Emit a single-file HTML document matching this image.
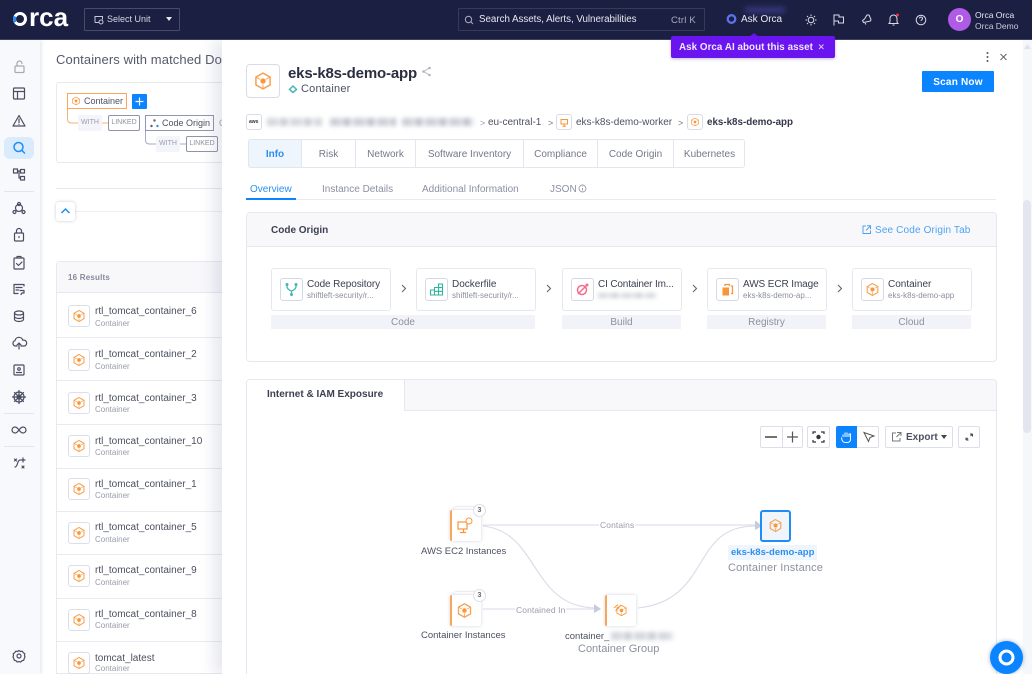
<!DOCTYPE html>
<html><head><meta charset="utf-8"><style>
*{box-sizing:border-box}
html,body{margin:0;padding:0;width:1032px;height:674px;overflow:hidden;background:#fff;font-family:"Liberation Sans",sans-serif;color:#3c4052}
#root{position:absolute;left:0;top:0;width:1032px;height:674px;overflow:hidden;filter:blur(.3px)}
.a{position:absolute}
.t{position:absolute;white-space:nowrap;line-height:14px}
svg{position:absolute;overflow:visible}
.ib{fill:none;stroke:#4a4e62;stroke-width:1.2;stroke-linecap:round;stroke-linejoin:round}
.box{position:absolute;background:#fff;border:1px solid #d9dce8;border-radius:3px}
.card{position:absolute;background:#fff;border:1px solid #e6e8f1;border-radius:3px;height:43px;top:268px;width:120px}
.lab{position:absolute;top:315px;height:14px;background:#f2f3f8;color:#8c90a0;font-size:10px;line-height:15px;text-align:center}
.cn{position:absolute;left:35px;top:8px;font-size:10px;color:#3c4052;line-height:15px;white-space:nowrap}
.cs{position:absolute;left:35px;top:21px;font-size:8px;color:#8c90a0;line-height:12px;white-space:nowrap}
.cb{position:absolute;left:8px;top:9px;width:23px;height:23px;border:1px solid #d5d8e5;border-radius:3px}
.tab{position:absolute;top:139px;height:29px;border-right:1px solid #e4e6ef;font-size:10px;line-height:31px;text-align:center;color:#74788a;white-space:nowrap}
.blur{position:absolute;filter:blur(2px);background:repeating-linear-gradient(90deg,#c3c6d0 0 9px,#d6d8e0 9px 14px,#b4b8c4 14px 20px,#e3e4ea 20px 24px)}
.nm{position:absolute;left:95px;font-size:10px;color:#4b4f60;line-height:13px;white-space:nowrap}
.sb{position:absolute;left:95px;font-size:8px;color:#9a9dab;line-height:11px;white-space:nowrap}
.lbox{position:absolute;left:68px;width:22px;height:22px;background:#fff;border:1px solid #dcdfe9;border-radius:3px}
.sep{position:absolute;left:57px;width:165px;height:1px;background:#e9ebf2}
.node{position:absolute;width:31px;height:31px;background:#fff;border-left:2px solid #f9a55a;border-radius:2px;box-shadow:0 0 3px rgba(120,125,160,.35)}
.tb{position:absolute;top:426px;height:22px;background:#fff;border:1px solid #dcdfea;border-radius:2px}
</style></head><body>
<svg width="0" height="0" style="position:absolute"><defs>
<symbol id="hex" viewBox="0 0 24 24"><path d="M12 2.500 20.500 7.300v9.400L12 21.500 3.500 16.700V7.300Z" fill="none" stroke="#f9a04e" stroke-width="1.800"/><path d="M3.500 7.300 8.500 10M20.500 7.300 15.500 10M12 21.500V16" fill="none" stroke="#f9a04e" stroke-width="1.100"/><circle cx="12" cy="12" r="3.200" fill="#f9963a"/></symbol>
</defs></svg>
<div id="root">
<!-- background content -->
<div class="t" style="left:56px;top:52px;font-size:13px;line-height:16px;color:#55596a;letter-spacing:.1px">Containers with matched Doc</div>
<div class="a" style="left:56px;top:82px;width:190px;height:81px;border:1px solid #e7e9f1;border-radius:3px"></div>
<svg style="left:0;top:0" width="230" height="170"><path d="M67.500 108V119q0 4 4 4H78M102 123h6" fill="none" stroke="#fbb26e" stroke-width="1"/><path d="M145.500 131V140q0 4 4 4H156M180 144h6" fill="none" stroke="#a6abc2" stroke-width="1"/></svg>
<div class="a" style="left:67px;top:93px;width:60px;height:16px;border:1px solid #fba65c;background:#fff"></div>
<svg style="left:71px;top:96px" width="10" height="10"><use href="#hex" width="10" height="10"/></svg>
<div class="t" style="left:84px;top:94px;font-size:9px;color:#4e5263">Container</div>
<div class="a" style="left:132px;top:94px;width:15px;height:15px;background:#0a84ff;border-radius:1px"></div>
<svg style="left:132px;top:94px" width="15" height="15"><path d="M7.500 3.500v8M3.500 7.500h8" stroke="#fff" stroke-width="1.200"/></svg>
<div class="a" style="left:78px;top:115px;width:24px;height:16px;background:#f4f5fa;border-radius:2px;font-size:7px;line-height:16px;text-align:center;color:#9a9dab">WITH</div>
<div class="a" style="left:108px;top:115px;width:32px;height:16px;border:1px solid #8f94a8;border-radius:2px;font-size:7px;line-height:14px;text-align:center;color:#8d91a1;background:#fff">LINKED</div>
<div class="a" style="left:145px;top:115px;width:69px;height:16px;border:1px solid #8f96b5;background:#fff"></div>
<svg style="left:150px;top:119px" width="9" height="9"><circle cx="4.500" cy="1.500" r="1.200" fill="#5a6080"/><circle cx="1.500" cy="7" r="1.200" fill="#5a6080"/><circle cx="7.500" cy="7" r="1.200" fill="#3f8fd8"/></svg>
<div class="t" style="left:162px;top:116px;font-size:9px;color:#4e5263">Code Origin</div>
<div class="t" style="left:219px;top:116px;font-size:9px;color:#a0a3b0">C</div>
<div class="a" style="left:156px;top:136px;width:24px;height:16px;background:#f4f5fa;border-radius:2px;font-size:7px;line-height:16px;text-align:center;color:#9a9dab">WITH</div>
<div class="a" style="left:186px;top:136px;width:32px;height:16px;border:1px solid #8f94a8;border-radius:2px;font-size:7px;line-height:14px;text-align:center;color:#8d91a1;background:#fff">LINKED</div>
<div class="a" style="left:56px;top:188px;width:170px;height:1px;background:#e5e7ef"></div>
<div class="a" style="left:56px;top:211px;width:170px;height:1px;background:#eceef4"></div>
<div class="a" style="left:56px;top:202px;width:19px;height:19px;background:#fff;border-radius:3px;box-shadow:0 0 3px rgba(100,105,140,.35)"></div>
<svg style="left:60px;top:207px" width="11" height="8"><path d="M1.500 6 5.500 2l4 4" fill="none" stroke="#1f8df5" stroke-width="1.500"/></svg>

<div class="a" style="left:56px;top:261px;width:180px;height:413px;border:1px solid #e7e9f1;border-radius:3px 0 0 0"></div>
<div class="a" style="left:57px;top:262px;width:170px;height:31px;background:#f8f8fb;border-bottom:1px solid #e6e8f0"></div>
<div class="t" style="left:68px;top:271px;font-size:8px;font-weight:bold;color:#85899a;letter-spacing:.2px">16 Results</div>
<div class="sep" style="top:337px"></div><div class="sep" style="top:380px"></div><div class="sep" style="top:424px"></div><div class="sep" style="top:468px"></div><div class="sep" style="top:511px"></div><div class="sep" style="top:554px"></div><div class="sep" style="top:598px"></div><div class="sep" style="top:641px"></div>

<div class="lbox" style="top:305px"></div><svg style="left:72px;top:309px" width="14" height="14"><use href="#hex" width="14" height="14"/></svg><div class="nm" style="top:305px">rtl_tomcat_container_6</div><div class="sb" style="top:318px">Container</div>
<div class="lbox" style="top:349px"></div><svg style="left:72px;top:353px" width="14" height="14"><use href="#hex" width="14" height="14"/></svg><div class="nm" style="top:348px">rtl_tomcat_container_2</div><div class="sb" style="top:361px">Container</div>
<div class="lbox" style="top:392px"></div><svg style="left:72px;top:396px" width="14" height="14"><use href="#hex" width="14" height="14"/></svg><div class="nm" style="top:392px">rtl_tomcat_container_3</div><div class="sb" style="top:404px">Container</div>
<div class="lbox" style="top:435px"></div><svg style="left:72px;top:439px" width="14" height="14"><use href="#hex" width="14" height="14"/></svg><div class="nm" style="top:435px">rtl_tomcat_container_10</div><div class="sb" style="top:447px">Container</div>
<div class="lbox" style="top:478px"></div><svg style="left:72px;top:482px" width="14" height="14"><use href="#hex" width="14" height="14"/></svg><div class="nm" style="top:478px">rtl_tomcat_container_1</div><div class="sb" style="top:490px">Container</div>
<div class="lbox" style="top:522px"></div><svg style="left:72px;top:526px" width="14" height="14"><use href="#hex" width="14" height="14"/></svg><div class="nm" style="top:521px">rtl_tomcat_container_5</div><div class="sb" style="top:534px">Container</div>
<div class="lbox" style="top:565px"></div><svg style="left:72px;top:569px" width="14" height="14"><use href="#hex" width="14" height="14"/></svg><div class="nm" style="top:564px">rtl_tomcat_container_9</div><div class="sb" style="top:577px">Container</div>
<div class="lbox" style="top:609px"></div><svg style="left:72px;top:613px" width="14" height="14"><use href="#hex" width="14" height="14"/></svg><div class="nm" style="top:608px">rtl_tomcat_container_8</div><div class="sb" style="top:620px">Container</div>
<div class="lbox" style="top:652px"></div><svg style="left:72px;top:656px" width="14" height="14"><use href="#hex" width="14" height="14"/></svg><div class="nm" style="top:652px">tomcat_latest</div><div class="sb" style="top:663px">Container</div>

<!-- sidebar -->
<div class="a" style="left:0;top:40px;width:40px;height:634px;background:#f8f9fc;box-shadow:1px 0 4px rgba(90,95,130,.18)"></div>
<div class="a" style="left:4px;top:137px;width:30px;height:22px;background:#d9ebfd;border-radius:6px"></div>
<div class="a" style="left:4px;top:191px;width:30px;height:1px;background:#e3e5ed"></div>
<div class="a" style="left:4px;top:413px;width:30px;height:1px;background:#e3e5ed"></div>
<div class="a" style="left:4px;top:446px;width:30px;height:1px;background:#e3e5ed"></div>
<svg style="left:0;top:0" width="40" height="674">
<g class="ib" style="stroke:#a5a8b5"><rect x="15" y="66" width="9" height="6.500" rx="1"/><path d="M17 66v-2.500a2.500 2.500 0 0 1 5 0"/></g>
<g class="ib"><rect x="13.500" y="88" width="11" height="11" rx="1"/><path d="M13.500 91.500h11M17.500 91.500V99"/>
<path d="M19 115.500 25 126H13Z"/><path d="M19 119v3.500M19 124.200v.2"/></g>
<g class="ib" style="stroke:#1f8df5;stroke-width:1.500"><circle cx="18.500" cy="147" r="4.500"/><path d="M22 150.500 24.500 153"/></g>
<g class="ib"><rect x="13.500" y="169" width="4" height="4"/><rect x="20.500" y="169.500" width="4" height="3.500"/><rect x="20.500" y="176.500" width="4" height="3.500"/><path d="M17.500 171h3M19 171v7h1.500"/>
<circle cx="19" cy="208" r="3.500"/><circle cx="19" cy="204" r="1.500"/><circle cx="14.500" cy="212" r="1.500"/><circle cx="23.500" cy="212" r="1.500"/>
<rect x="14.500" y="233" width="9" height="8" rx="1"/><path d="M16.500 233v-2a2.500 2.500 0 0 1 5 0v2M19 236.500v1"/>
<rect x="14" y="258" width="10" height="11" rx="1"/><path d="M17 258v-1.500h4V258M16.500 263.500l2 2 3.500-3.500"/>
<path d="M24 286v-1.500h-10v9h4M16 287.500h6M16 290h2.500M20 290.500h4v2.500h-2l-1 1.500"/>
<ellipse cx="19" cy="313" rx="4.500" ry="2"/><path d="M14.500 313v6.500c0 1 2 2 4.500 2s4.500-1 4.500-2V313M14.500 316.500c0 1 2 2 4.500 2s4.500-1 4.500-2"/>
<path d="M17 346h-1.500a2.700 2.700 0 0 1-.5-5.300 4 4 0 0 1 7.800-.5 2.800 2.800 0 0 1 1.700 5.800H21M19 349v-6M17 345l2-2 2 2"/>
<rect x="14" y="365" width="10" height="10" rx="1"/><circle cx="19" cy="369" r="1.300"/><path d="M16.500 372.500h5"/>
<circle cx="19" cy="397" r="5"/><circle cx="19" cy="397" r="2"/><path d="M19 390.500v13M12.500 397h13M14.500 392.500l9 9M23.500 392.500l-9 9"/>
<path d="M19 430c-1.500-2-2.500-3-4-3a3 3 0 0 0 0 6c1.500 0 2.500-1 4-3s2.500-3 4-3a3 3 0 0 1 0 6c-1.500 0-2.500-1-4-3Z"/>
<path d="M15 467c3 0 2-7 5-7M23 458v4M21 460h4M14.500 459l2 2M16.500 459l-2 2M22 466l2 2M24 466l-2 2"/>
<circle cx="19" cy="656" r="2"/><path d="M19 650.500l1.500 1 1.800-.3 1 1.500 1.500 1-.3 1.800.5 1.500-.8 1.600-.5 1.700-1.700.4-1.200 1.300-1.800-.4-1.800.4-1.200-1.300-1.700-.4-.5-1.700-.8-1.600.5-1.500-.3-1.800 1.500-1 1-1.500 1.800.3Z"/></g>
</svg>

<!-- panel -->
<div class="a" style="left:222px;top:40px;width:810px;height:634px;background:#fff;box-shadow:-8px 0 14px rgba(100,105,140,.16)"></div>
<div class="a" style="left:1023px;top:40px;width:9px;height:634px;background:#f6f7fa"></div>
<div class="a" style="left:1023px;top:200px;width:8px;height:233px;background:#e3e6ef;border-radius:4px"></div>
<svg style="left:1023px;top:44px" width="9" height="6"><path d="M4.500 0 8 5H1Z" fill="#dfe2ec"/></svg>
<svg style="left:980px;top:50px" width="30" height="14"><circle cx="7.500" cy="3" r="1" fill="#555"/><circle cx="7.500" cy="7" r="1" fill="#555"/><circle cx="7.500" cy="11" r="1" fill="#555"/><path d="M20.500 4 26.500 10M26.500 4 20.500 10" stroke="#666" stroke-width="1"/></svg>

<div class="box" style="left:246px;top:64px;width:34px;height:34px;border-radius:4px"></div>
<svg style="left:253px;top:71px" width="20" height="20"><use href="#hex" width="20" height="20"/></svg>
<div class="t" style="left:288px;top:65px;font-size:15px;line-height:18px;font-weight:bold;color:#2b2e40;letter-spacing:-.17px">eks-k8s-demo-app</div>
<svg style="left:421px;top:66px" width="11" height="11"><path d="M8.500 2 2.500 5.500l6 3.500" fill="none" stroke="#b3b6c2"/><circle cx="8.500" cy="2" r="1.300" fill="#b3b6c2"/><circle cx="2.500" cy="5.500" r="1.300" fill="#b3b6c2"/><circle cx="8.500" cy="9" r="1.300" fill="#b3b6c2"/></svg>
<svg style="left:288px;top:84px" width="10" height="10"><path d="M1.500 5.500 5 2l3.500 3.500L5 8.500Z" fill="none" stroke="#49b8b0" stroke-width="1.500"/></svg>
<div class="t" style="left:301px;top:82px;font-size:11px;color:#4d5163;letter-spacing:.2px">Container</div>
<div class="a" style="left:922px;top:71px;width:72px;height:21px;background:#0a84ff;border-radius:1px;color:#fff;font-size:10px;font-weight:bold;line-height:23px;text-align:center;letter-spacing:.2px">Scan Now</div>

<!-- breadcrumb -->
<div class="box" style="left:246px;top:114px;width:16px;height:16px"></div>
<div class="t" style="left:249px;top:119px;font-size:5px;line-height:6px;font-weight:bold;color:#333">aws</div>
<div class="blur" style="left:267px;top:118px;width:55px;height:8px;opacity:.7"></div>
<div class="blur" style="left:330px;top:118px;width:66px;height:8px;opacity:.85"></div>
<div class="blur" style="left:402px;top:118px;width:72px;height:8px;opacity:.85"></div>
<div class="t" style="left:480px;top:116px;font-size:9px;color:#9a9dab">&gt;</div>
<div class="t" style="left:488px;top:116px;font-size:10px;color:#4d5163">eu-central-1</div>
<div class="t" style="left:548px;top:116px;font-size:9px;color:#777">&gt;</div>
<div class="box" style="left:556px;top:114px;width:16px;height:16px"></div>
<svg style="left:560px;top:118px" width="9" height="9"><path d="M1 1.500h6.500v4.500H1ZM4.200 6v2M2.500 8.200h3.500" fill="none" stroke="#f9963a"/></svg>
<div class="t" style="left:576px;top:116px;font-size:10px;color:#4d5163">eks-k8s-demo-worker</div>
<div class="t" style="left:678px;top:116px;font-size:9px;color:#777">&gt;</div>
<div class="box" style="left:687px;top:114px;width:16px;height:16px"></div>
<svg style="left:690px;top:117px" width="10" height="10"><use href="#hex" width="10" height="10"/></svg>
<div class="t" style="left:707px;top:116px;font-size:9.800px;font-weight:bold;color:#33364a">eks-k8s-demo-app</div>

<!-- tabs -->
<div class="a" style="left:248px;top:139px;width:497px;height:29px;border:1px solid #e4e6ef;border-radius:3px"></div>
<div class="tab" style="left:248px;width:54px;background:#eff5fc;color:#2d8ff0;font-weight:bold;border-radius:3px 0 0 3px;border:1px solid #e4e6ef;line-height:29px">Info</div>
<div class="tab" style="left:302px;width:54px">Risk</div>
<div class="tab" style="left:356px;width:60px">Network</div>
<div class="tab" style="left:416px;width:108px">Software Inventory</div>
<div class="tab" style="left:524px;width:74px">Compliance</div>
<div class="tab" style="left:598px;width:76px">Code Origin</div>
<div class="tab" style="left:674px;width:71px;border-right:0">Kubernetes</div>

<div class="a" style="left:246px;top:199px;width:750px;height:1px;background:#e8eaf1"></div>
<div class="a" style="left:246px;top:198px;width:50px;height:2px;background:#0a84ff"></div>
<div class="t" style="left:250px;top:183px;font-size:10px;color:#2d8ff0">Overview</div>
<div class="t" style="left:322px;top:183px;font-size:10px;color:#8c90a0">Instance Details</div>
<div class="t" style="left:422px;top:183px;font-size:10px;color:#8c90a0">Additional Information</div>
<div class="t" style="left:550px;top:183px;font-size:10px;color:#8c90a0">JSON</div>
<svg style="left:578px;top:184px" width="9" height="9"><circle cx="4.500" cy="4.500" r="3.500" fill="none" stroke="#9a9dab" stroke-width=".9"/><path d="M4.500 4v2.500M4.500 2.500v.5" stroke="#9a9dab"/></svg>

<!-- Code Origin -->
<div class="a" style="left:246px;top:212px;width:751px;height:150px;border:1px solid #e6e8f1;border-radius:4px;overflow:hidden"><div class="a" style="left:0;top:0;width:100%;height:34px;background:#f8f8fb;border-bottom:1px solid #e6e8f1"></div></div>
<div class="t" style="left:271px;top:224px;font-size:10px;font-weight:bold;color:#3c4052">Code Origin</div>
<svg style="left:862px;top:225px" width="9" height="9"><path d="M4 1H1v7.500h7.500V5.500M5 .8h3.500v3.500M8.500.8 4 5.500" fill="none" stroke="#4ba3f5"/></svg>
<div class="t" style="left:875px;top:224px;font-size:10px;color:#4ba3f5;letter-spacing:.15px">See Code Origin Tab</div>

<div class="card" style="left:271px"><div class="cb"></div><svg style="left:12px;top:13px" width="15" height="15"><path d="M3 2.500v2q0 3 4.500 4.500V13M12 2.500v2Q12 7.500 7.500 9" fill="none" stroke="#3fb8b0" stroke-width="1.300"/><circle cx="3" cy="2.500" r="1.500" fill="#3fb8b0"/><circle cx="12" cy="2.500" r="1.500" fill="#3fb8b0"/><circle cx="7.500" cy="12.500" r="1.500" fill="#3fb8b0"/></svg><div class="cn" style="letter-spacing:-.1px">Code Repository</div><div class="cs">shiftleft-security/r...</div></div>
<div class="card" style="left:416px"><div class="cb"></div><svg style="left:12px;top:13px" width="15" height="15"><path d="M1.500 8h4v5h-4ZM5.500 5.500h4V13h-4ZM9.500 2h4v11h-4ZM5.500 9.300h8M9.500 5.600h4" fill="none" stroke="#2fb39f" stroke-width="1.100"/></svg><div class="cn">Dockerfile</div><div class="cs">shiftleft-security/r...</div></div>
<div class="card" style="left:562px"><div class="cb"></div><svg style="left:12px;top:13px" width="15" height="15"><circle cx="7" cy="8" r="4.500" fill="none" stroke="#f46b8e" stroke-width="1.500"/><path d="M3 12 12 3" stroke="#f46b8e" stroke-width="1.500"/><circle cx="12" cy="3" r="1.500" fill="#f46b8e"/></svg><div class="cn" style="letter-spacing:-.15px">CI Container Im...</div><div class="blur" style="left:35px;top:24px;width:58px;height:5px;opacity:.7"></div></div>
<div class="card" style="left:707px"><div class="cb"></div><svg style="left:13px;top:14px" width="14" height="14"><path d="M1.500 4.500h6.500v8H1.500Z" fill="#f9963a"/><path d="M4 3V1.500h4.500V3M10 3h1.500v7.500H10" fill="none" stroke="#f9963a" stroke-width="1.300"/></svg><div class="cn" style="letter-spacing:-.1px">AWS ECR Image</div><div class="cs">eks-k8s-demo-ap...</div></div>
<div class="card" style="left:852px"><div class="cb"></div><svg style="left:12px;top:13px" width="15" height="15"><use href="#hex" width="15" height="15"/></svg><div class="cn">Container</div><div class="cs">eks-k8s-demo-app</div></div>
<svg style="left:400px;top:284px" width="450" height="10"><path d="M2 1 5.500 4.500 2 8M147 1l3.500 3.500L147 8M293 1l3.500 3.500L293 8M438 1l3.500 3.500L438 8" fill="none" stroke="#666" stroke-width="1.100"/></svg>
<div class="lab" style="left:271px;width:264px">Code</div>
<div class="lab" style="left:562px;width:119px">Build</div>
<div class="lab" style="left:707px;width:119px">Registry</div>
<div class="lab" style="left:852px;width:119px">Cloud</div>

<!-- Exposure -->
<div class="a" style="left:246px;top:379px;width:751px;height:300px;border:1px solid #e6e8f1;border-radius:4px 4px 0 0;overflow:hidden"><div class="a" style="left:0;top:0;width:100%;height:31px;background:#f8f8fb;border-bottom:1px solid #e6e8f1"></div><div class="a" style="left:0;top:0;width:158px;height:31px;background:#fff;border-right:1px solid #e6e8f1"></div></div>
<div class="t" style="left:267px;top:388px;font-size:10px;font-weight:bold;color:#3c4052">Internet &amp; IAM Exposure</div>

<div class="tb" style="left:760px;width:43px"><div class="a" style="left:21px;top:0;width:1px;height:20px;background:#dcdfea"></div></div>
<svg style="left:760px;top:426px" width="44" height="22"><path d="M5 11h12" stroke="#444" stroke-width="1.500"/><path d="M32.500 5.500v11M27 11h11" stroke="#555" stroke-width="1.200"/></svg>
<div class="tb" style="left:807px;width:23px"></div>
<svg style="left:807px;top:426px" width="23" height="22"><path d="M6 8V6h3M14 6h3v2M17 14v2h-3M9 16H6v-2" fill="none" stroke="#333" stroke-width="1.200"/><circle cx="11.500" cy="11" r="2.200" fill="#333"/></svg>
<div class="tb" style="left:836px;width:43px"></div>
<div class="a" style="left:836px;top:426px;width:21px;height:22px;background:#0a84ff;border-radius:2px 0 0 2px"></div>
<svg style="left:836px;top:426px" width="43" height="22"><path d="M7 11V8.500M9 11V6.500M11 11V6.500M13 11V8l1.500 0V13q0 3.500-3.500 3.500H9.500Q7 16.500 6 14l-.5-2.500" fill="none" stroke="#fff" stroke-width="1"/><path d="M28 6.500 38 10l-4 1.500-1.500 4Z" fill="none" stroke="#555" stroke-width="1"/></svg>
<div class="tb" style="left:885px;width:68px"></div>
<svg style="left:891px;top:431px" width="11" height="11"><path d="M5 2H1.500v8H9V7M6 1.500h4v3.500M10 1.500 5.500 6" fill="none" stroke="#777" stroke-width="1"/></svg>
<div class="t" style="left:906px;top:431px;font-size:10px;font-weight:bold;color:#4d5060">Export</div>
<svg style="left:941px;top:435px" width="6" height="4"><path d="M0 0h6L3 4Z" fill="#444"/></svg>
<div class="tb" style="left:958px;width:22px"></div>
<svg style="left:958px;top:426px" width="22" height="22"><path d="M8 14v-2.500M8 14h2.500M8 14l2-2M14.500 8h-2.500M14.500 8v2.500M14.500 8l-2 2" fill="none" stroke="#444" stroke-width="1"/></svg>

<!-- graph -->
<svg style="left:0;top:0" width="1032" height="674"><g fill="none" stroke="#d8dbe8" stroke-width="1.100">
<path d="M483 525H755"/><path d="M483 526C540 532 530 608 597 608"/><path d="M483 609H597"/><path d="M638 608C712 600 690 526 755 526"/></g>
<path d="M755 521 756 521 762 526 755 530Z" fill="#c6cbdd"/><path d="M594 604 601 609 594 613Z" fill="#c6cbdd"/></svg>
<div class="t" style="left:599px;top:518px;padding:0 1px;background:#fff;font-size:8.500px;color:#9a9dab;letter-spacing:.1px">Contains</div>
<div class="t" style="left:515px;top:603px;padding:0 1px;background:#fff;font-size:8.500px;color:#9a9dab;letter-spacing:.1px">Contained In</div>

<div class="a" style="left:454px;top:507px;width:26px;height:6px;background:#fff;box-shadow:0 0 2px rgba(120,125,160,.4);border-radius:2px"></div>
<div class="node" style="left:450px;top:510px"></div>
<svg style="left:457px;top:517px" width="18" height="18"><path d="M1 5h9v7H1ZM6.500 12v3.500M3 15.500h6" fill="none" stroke="#f9963a" stroke-width="1.200"/><circle cx="12" cy="4" r="3" fill="#fff" stroke="#f9963a"/></svg>
<div class="a" style="left:473px;top:504px;width:13px;height:13px;background:#fff;border:1px solid #dcdfea;border-radius:50%;font-size:7px;font-weight:bold;line-height:11px;text-align:center;color:#666">3</div>
<div class="t" style="left:421px;top:545px;font-size:9.500px;color:#4d5163;letter-spacing:-.03px">AWS EC2 Instances</div>

<div class="a" style="left:454px;top:592px;width:26px;height:6px;background:#fff;box-shadow:0 0 2px rgba(120,125,160,.4);border-radius:2px"></div>
<div class="node" style="left:450px;top:595px"></div>
<svg style="left:456px;top:602px" width="17" height="17"><use href="#hex" width="17" height="17"/></svg>
<div class="a" style="left:473px;top:589px;width:13px;height:13px;background:#fff;border:1px solid #dcdfea;border-radius:50%;font-size:7px;font-weight:bold;line-height:11px;text-align:center;color:#666">3</div>
<div class="t" style="left:421px;top:629px;font-size:9.500px;color:#4d5163">Container Instances</div>

<div class="node" style="left:605px;top:595px"></div>
<svg style="left:612px;top:602px" width="17" height="17"><use href="#hex" x="3" y="2" width="13" height="13"/><path d="M2 6 6 2.500M3.500 9 9 3" fill="none" stroke="#f9963a"/></svg>
<div class="t" style="left:565px;top:630px;font-size:9.500px;color:#4d5163">container_</div>
<div class="blur" style="left:611px;top:632px;width:62px;height:8px;opacity:.7"></div>
<div class="t" style="left:578px;top:642px;font-size:11px;color:#8c90a0">Container Group</div>

<div class="a" style="left:760px;top:510px;width:31px;height:32px;background:#f0f5fc;border:2px solid #1f8df5;border-radius:3px"></div>
<svg style="left:768px;top:518px" width="15" height="15"><use href="#hex" width="15" height="15"/></svg>
<div class="t" style="left:728px;top:545px;padding:0 3px;background:#eff5fc;font-size:9.500px;font-weight:bold;color:#2d8ff0;line-height:15px">eks-k8s-demo-app</div>
<div class="t" style="left:728px;top:561px;font-size:11px;color:#8c90a0;letter-spacing:.15px">Container Instance</div>

<!-- chat -->
<div class="a" style="left:990px;top:641px;width:33px;height:33px;background:#0a84ff;border-radius:50%;box-shadow:0 0 4px rgba(0,60,140,.4)"></div>
<svg style="left:990px;top:641px" width="33" height="33"><circle cx="16.500" cy="16.500" r="6.500" fill="none" stroke="#fff" stroke-width="3"/></svg>

<!-- topbar -->
<div class="a" style="left:0;top:0;width:1032px;height:40px;background:#1b1f41;border-bottom:1px solid #3c4160"></div>
<svg style="left:12px;top:12px" width="16" height="16"><circle cx="8" cy="7" r="5.500" fill="none" stroke="#fff" stroke-width="3"/><path d="M3 4.500a6 6 0 0 0 .5 5.500" fill="none" stroke="#1f8df5" stroke-width="3"/></svg>
<div class="t" style="left:29px;top:5px;font-size:26px;line-height:24px;font-weight:bold;color:#fff">rca</div>
<div class="a" style="left:84px;top:8px;width:96px;height:23px;border:1px solid #474c6d;border-radius:1px"></div>
<svg style="left:94px;top:15px" width="10" height="10"><path d="M1 7.500V1.500h7.500v3M1 7.500h4" fill="none" stroke="#c5c8d6"/><circle cx="7" cy="7" r="2" fill="none" stroke="#c5c8d6"/></svg>
<div class="t" style="left:107px;top:12px;font-size:9px;color:#d8dae4">Select Unit</div>
<svg style="left:166px;top:17px" width="6" height="4"><path d="M0 0h6L3 4Z" fill="#e6e8f0"/></svg>

<div class="a" style="left:458px;top:8px;width:247px;height:23px;border:1px solid #363b5a;border-radius:1px"></div>
<svg style="left:464px;top:15px" width="10" height="10"><circle cx="4.500" cy="4.500" r="3.200" fill="none" stroke="#a9acc0"/><path d="M7 7 9 9" stroke="#a9acc0"/></svg>
<div class="t" style="left:479px;top:13px;font-size:9.800px;color:#e6e8f0;letter-spacing:-.03px">Search Assets, Alerts, Vulnerabilities</div>
<div class="t" style="left:671px;top:14px;font-size:9.500px;color:#a9acc0;letter-spacing:.2px">Ctrl K</div>

<div class="a" style="left:745px;top:7px;width:40px;height:6px;background:#3c3f8c;filter:blur(3px);opacity:.8"></div>
<svg style="left:726px;top:13px" width="12" height="12"><circle cx="5.500" cy="6" r="3.800" fill="none" stroke="#5b73e8" stroke-width="2.300"/></svg>
<div class="t" style="left:741px;top:13px;font-size:10px;color:#e6e8f0">Ask Orca</div>
<svg style="left:0;top:0" width="1032" height="40"><g fill="none" stroke="#d9dbe6" stroke-width="1">
<circle cx="811" cy="20" r="2.800"/><path d="M811 14.500v1.500M811 24v1.500M805.500 20h1.500M815 20h1.500M807 16l1 1M814 23l1 1M815 16l-1 1M808 23l-1 1"/>
<path d="M834 25.500V15h5v2h4.500v6H838.500V21H834"/>
<path d="M867 15l-2.500 4-2 1.500 1 2 7-1.500 .5-1.500-2-4.500ZM865 23l1 1.500"/>
<path d="M893.500 15a3.500 3.500 0 0 0-3.500 3.500V22l-1 1.500h9l-1-1.500v-3.500a3.500 3.500 0 0 0-3.500-3.500ZM892.500 25h2"/>
<circle cx="921" cy="20" r="4.800"/><path d="M919.500 18.500a1.500 1.500 0 1 1 2 1.500q-.5.300-.5 1M921 22.300v.2"/></g>
<circle cx="897.500" cy="15" r="1.500" fill="#ee3344"/></svg>
<div class="a" style="left:948px;top:8px;width:23px;height:23px;border-radius:50%;background:#b05be6;color:#fff;font-size:10px;font-weight:bold;line-height:23px;text-align:center">O</div>
<div class="t" style="left:975px;top:10px;font-size:8.500px;line-height:11px;color:#e6e8f0">Orca Orca</div>
<div class="t" style="left:975px;top:21px;font-size:8.500px;line-height:11px;color:#c9ccd9">Orca Demo</div>

<!-- tooltip -->
<svg style="left:749px;top:33px" width="10" height="4"><path d="M0 4 5 0l5 4Z" fill="#6a14f0"/></svg>
<div class="a" style="left:671px;top:36px;width:164px;height:22px;background:#6a14f0;border-radius:2px;box-shadow:0 1px 3px rgba(60,20,130,.3)"></div>
<div class="t" style="left:679px;top:41px;font-size:9.800px;font-weight:bold;color:#f0e8ff;letter-spacing:.05px">Ask Orca AI about this asset</div>
<svg style="left:818px;top:43px" width="7" height="7"><path d="M1 1.500 5.500 6M5.500 1.500 1 6" stroke="#d8c4ff" stroke-width="1"/></svg>
</div>
</body></html>
